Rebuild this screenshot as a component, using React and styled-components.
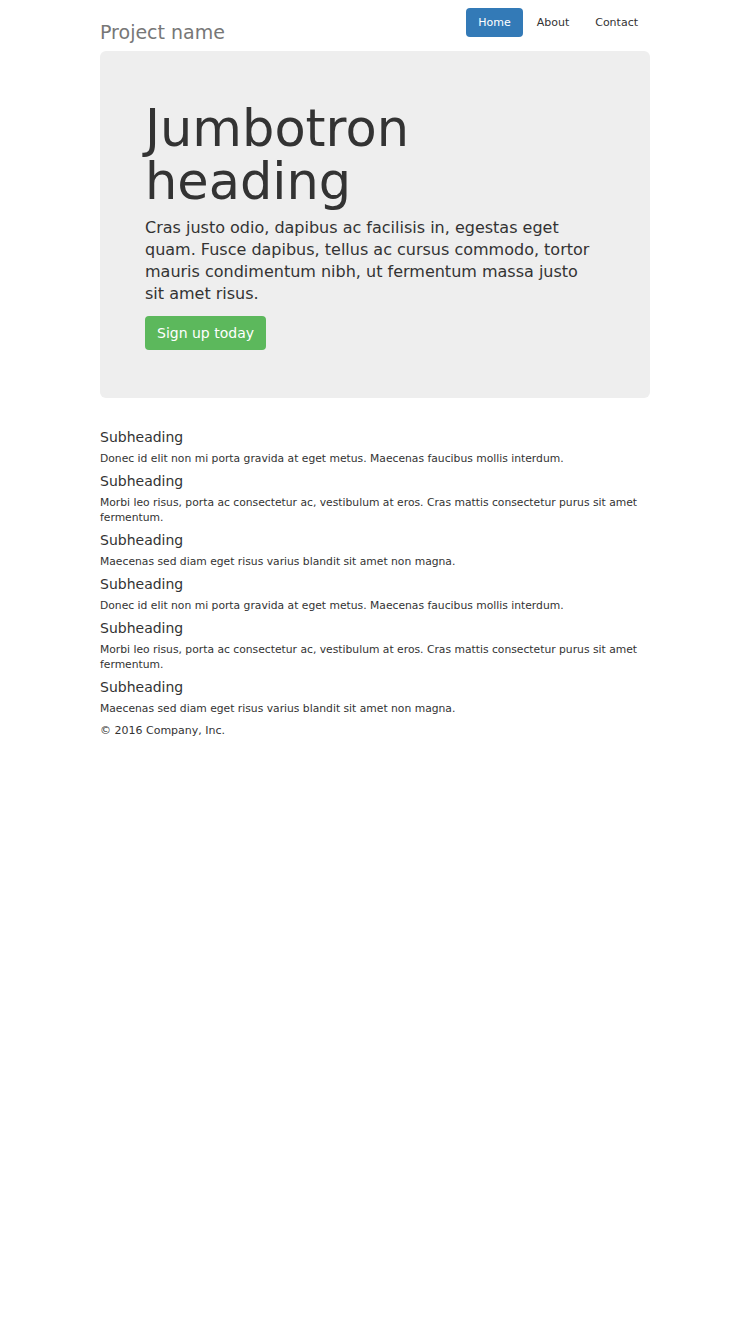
import styled, { createGlobalStyle } from "styled-components";

const GlobalStyle = createGlobalStyle`
  body {
    margin: 0;
    background: #fff;
    color: #333;
    font-family: "DejaVu Sans", "Open Sans", sans-serif;
  }
`;

const items = [
  "Donec id elit non mi porta gravida at eget metus. Maecenas faucibus mollis interdum.",
  "Morbi leo risus, porta ac consectetur ac, vestibulum at eros. Cras mattis consectetur purus sit amet fermentum.",
  "Maecenas sed diam eget risus varius blandit sit amet non magna.",
  "Donec id elit non mi porta gravida at eget metus. Maecenas faucibus mollis interdum.",
  "Morbi leo risus, porta ac consectetur ac, vestibulum at eros. Cras mattis consectetur purus sit amet fermentum.",
  "Maecenas sed diam eget risus varius blandit sit amet non magna.",
];

const App = () => {
  return (
    <>
      <GlobalStyle />
      <Container>
        <Header>
          <Brand>Project name</Brand>
          <Nav>
            <Pill active>Home</Pill>
            <Pill>About</Pill>
            <Pill>Contact</Pill>
          </Nav>
        </Header>
        <Jumbotron>
          <Heading>Jumbotron heading</Heading>
          <Lead>
            Cras justo odio, dapibus ac facilisis in, egestas eget quam. Fusce
            dapibus, tellus ac cursus commodo, tortor mauris condimentum nibh,
            ut fermentum massa justo sit amet risus.
          </Lead>
          <SignUp>Sign up today</SignUp>
        </Jumbotron>
        <Marketing>
          {items.map((text, id) => (
            <div key={id}>
              <Subheading>Subheading</Subheading>
              <Text>{text}</Text>
            </div>
          ))}
        </Marketing>
        <Footer>© 2016 Company, Inc.</Footer>
      </Container>
    </>
  );
};

const Container = styled.div`
  width: 550px;
  margin: 0 auto;
`;

const Header = styled.div`
  display: flex;
  justify-content: space-between;
  align-items: flex-start;
  padding-top: 8px;
`;

const Brand = styled.h3`
  margin: 12px 0 7px;
  font-size: 19px;
  line-height: 24px;
  font-weight: 400;
  color: #777;
`;

const Nav = styled.div`
  display: flex;
  gap: 2px;
`;

const Pill = styled.a`
  display: block;
  height: 29px;
  line-height: 29px;
  padding: 0 12px;
  border-radius: 4px;
  font-size: 11px;
  color: ${(p) => (p.active ? "#fff" : "#333")};
  background: ${(p) => (p.active ? "#337ab7" : "transparent")};
`;

const Jumbotron = styled.div`
  background: #eee;
  border-radius: 6px;
  padding: 51px 45px 48px;
`;

const Heading = styled.h1`
  margin: 0 0 9px;
  font-size: 51px;
  line-height: 53px;
  font-weight: 400;
  color: #333;
  width: 300px;
`;

const Lead = styled.p`
  margin: 0 0 11px;
  padding-right: 10px;
  font-size: 16px;
  line-height: 22px;
  color: #333;
`;

const SignUp = styled.a`
  display: inline-block;
  height: 34px;
  line-height: 34px;
  padding: 0 12px;
  border-radius: 4px;
  background: #5cb85c;
  color: #fff;
  font-size: 14px;
`;

const Marketing = styled.div`
  margin-top: 29px;
`;

const Subheading = styled.h4`
  margin: 0 0 4px;
  font-size: 14px;
  line-height: 20px;
  font-weight: 400;
  color: #333;
`;

const Text = styled.p`
  margin: 0 0 5px;
  font-size: 10.75px;
  line-height: 15px;
  color: #333;
`;

const Footer = styled.footer`
  margin-top: 8px;
  font-size: 11px;
  line-height: 14px;
  color: #333;
`;

export default App;
